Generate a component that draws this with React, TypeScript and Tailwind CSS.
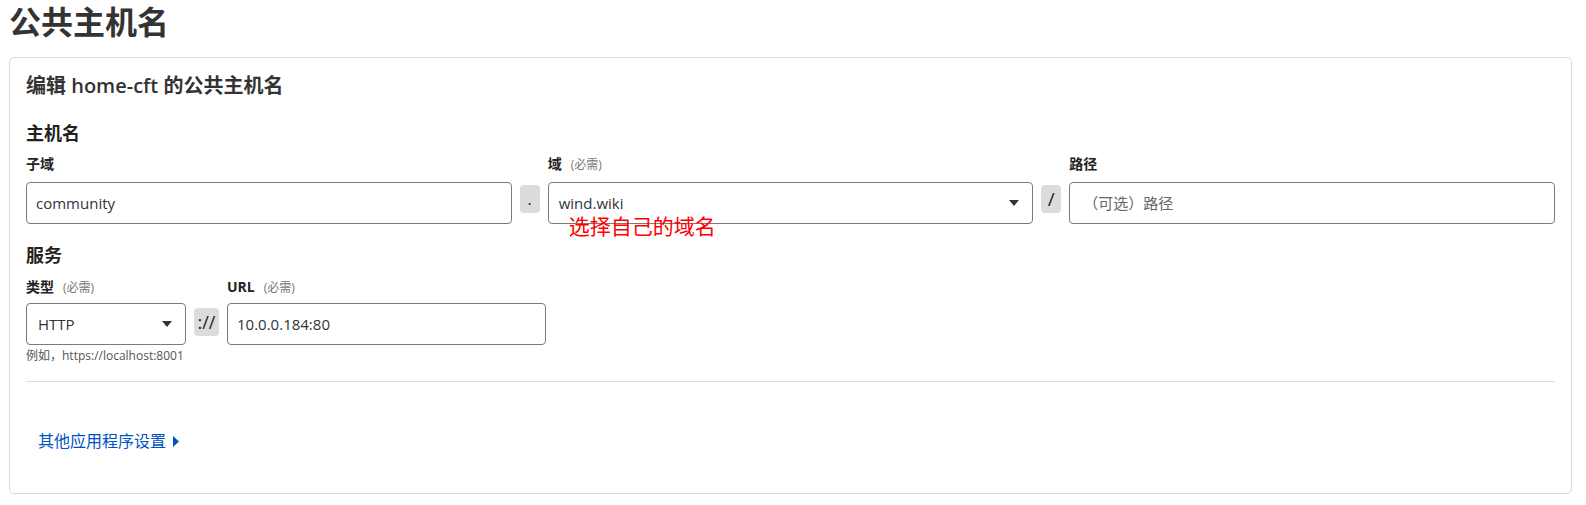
import type { ReactNode } from "react";

const FONT = "font-['Open_Sans','Noto_Sans_CJK_SC',sans-serif]";

function Required() {
  return <span className="ml-[9px] text-[12px] font-normal text-[#777]">(必需)</span>;
}

function Label({ children, required }: { children: ReactNode; required?: boolean }) {
  return (
    <div className="flex items-baseline h-5 text-[14px] leading-5 font-bold text-[#222]">
      {children}
      {required && <Required />}
    </div>
  );
}

function Sep({ children }: { children: ReactNode }) {
  return (
    <div className="mt-[31px] h-7 min-w-5 px-[3px] flex items-center justify-center rounded-[4px] bg-[#dcdcdc] text-[16px] text-[#222]">
      {children}
    </div>
  );
}

function Caret() {
  return (
    <svg width="10" height="6" viewBox="0 0 10 6" className="shrink-0">
      <path d="M0 0h10L5 6z" fill="#333" />
    </svg>
  );
}

function Box({ children, className = "" }: { children: ReactNode; className?: string }) {
  return (
    <div
      className={`h-[42px] flex items-center border border-[#7a7a7a] rounded-[4px] bg-white text-[15px] text-[#333] ${className}`}
    >
      {children}
    </div>
  );
}

export default function App() {
  return (
    <div className={`${FONT} min-h-screen bg-white pl-[9px] pr-[14px] text-[#333]`}>
      <h1 className="pt-[3px] text-[32px] leading-[38px] font-semibold text-[#333]">公共主机名</h1>

      <div className="mt-4 border border-[#d9d9d9] rounded-[5px] px-4 pt-[14px] pb-[40px]">
        <h2 className="text-[20px] leading-7 font-semibold text-[#333]">编辑 home-cft 的公共主机名</h2>

        {/* 主机名 */}
        <h3 className="mt-5 text-[18px] leading-[27px] font-bold text-[#222]">主机名</h3>
        <div className="mt-[7px] flex gap-2">
          <div className="flex-1">
            <Label>子域</Label>
            <Box className="mt-2 px-[9px]">community</Box>
          </div>
          <Sep>.</Sep>
          <div className="flex-1">
            <Label required>域</Label>
            <div className="relative mt-2">
              <Box className="pl-[10px] pr-[13px] justify-between">
                <span>wind.wiki</span>
                <Caret />
              </Box>
              <span className="absolute left-[21px] top-[32px] text-[21px] leading-6 text-[#ff0000] whitespace-nowrap">
                选择自己的域名
              </span>
            </div>
          </div>
          <Sep>
            <span className="text-[19px]">/</span>
          </Sep>
          <div className="flex-1">
            <Label>路径</Label>
            <Box className="mt-2 px-[13px] text-[#666]">（可选）路径</Box>
          </div>
        </div>

        {/* 服务 */}
        <h3 className="mt-[18px] text-[18px] leading-[27px] font-bold text-[#222]">服务</h3>
        <div className="mt-2 flex gap-2">
          <div className="w-40">
            <Label required>类型</Label>
            <Box className="mt-[6px] pl-[11px] pr-[13px] justify-between">
              <span>HTTP</span>
              <Caret />
            </Box>
            <p className="mt-1 text-[12px] leading-[14px] text-[#555] whitespace-nowrap">例如，https://localhost:8001</p>
          </div>
          <div className="mt-[31px] h-7 w-[25px] flex items-center justify-center rounded-[4px] bg-[#dcdcdc] text-[18px] text-[#222]">
            ://
          </div>
          <div className="w-[319px]">
            <Label required>URL</Label>
            <Box className="mt-[6px] px-[9px]">10.0.0.184:80</Box>
          </div>
        </div>

        <div className="mt-[18px] border-t border-[#dddddd]" />

        <a href="#" className="mt-[47px] pl-3 flex items-center gap-[7px] text-[16px] leading-6 text-[#0051c3]">
          其他应用程序设置
          <svg width="6" height="11" viewBox="0 0 6 11">
            <path d="M0 0l6 5.5L0 11z" fill="#0051c3" />
          </svg>
        </a>
      </div>
    </div>
  );
}
